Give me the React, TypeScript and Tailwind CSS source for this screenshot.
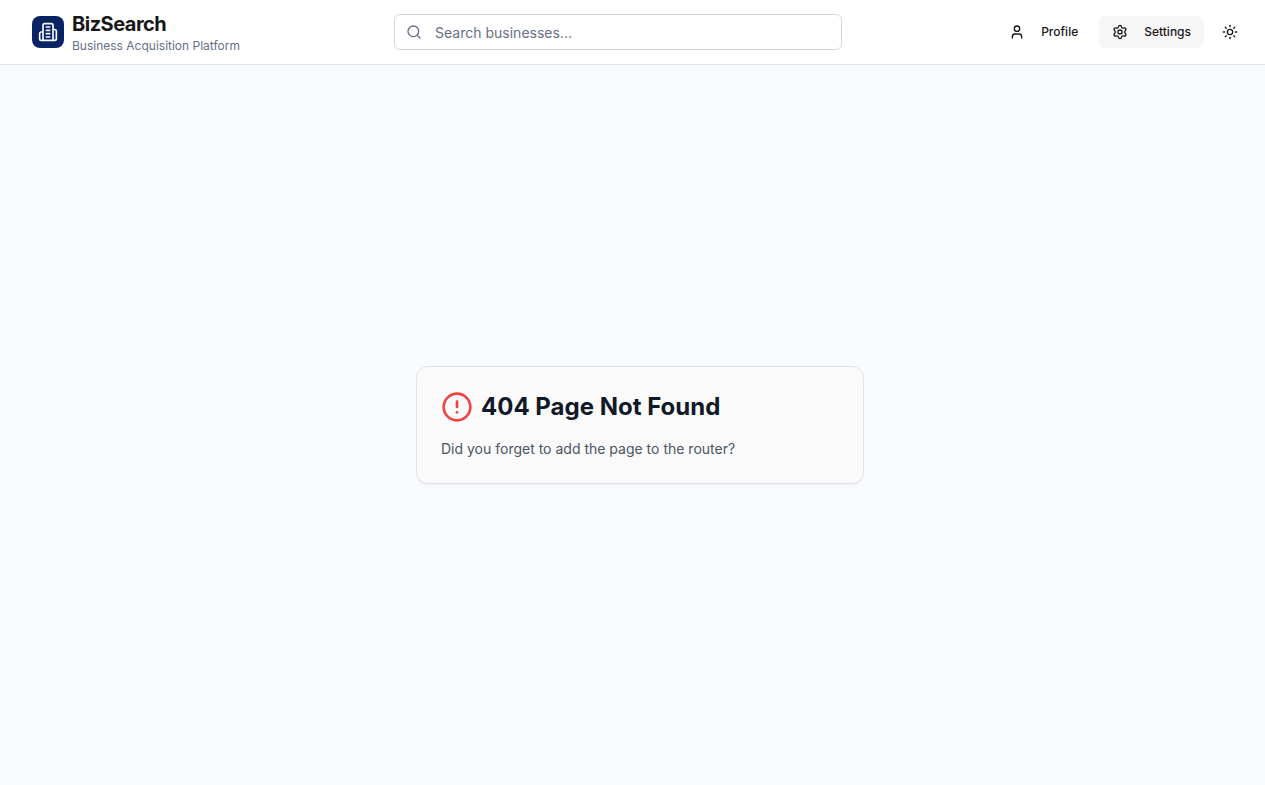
import { CircleAlert, Search, Settings, Sun, User } from "lucide-react";

function BuildingIcon({ className }: { className?: string }) {
  return (
    <svg
      viewBox="0 0 24 24"
      fill="none"
      stroke="currentColor"
      strokeWidth="2"
      strokeLinecap="round"
      strokeLinejoin="round"
      aria-hidden="true"
      className={className}
    >
      <path d="M6 22V4a2 2 0 0 1 2-2h8a2 2 0 0 1 2 2v18Z" />
      <path d="M6 12H4a2 2 0 0 0-2 2v6a2 2 0 0 0 2 2h2" />
      <path d="M18 9h2a2 2 0 0 1 2 2v9a2 2 0 0 1-2 2h-2" />
      <path d="M10 6h4" />
      <path d="M10 10h4" />
      <path d="M10 14h4" />
      <path d="M10 18h4" />
    </svg>
  );
}

function Header() {
  return (
    <header className="border-b border-[#e2e5ea] bg-white">
      <div className="flex h-16 items-center justify-between gap-4 pl-8 pr-[17px]">
        <a href="/" className="flex items-center gap-2">
          <span className="flex size-8 items-center justify-center rounded-lg bg-[#0a2463]">
            <BuildingIcon className="size-5 text-[#f8fafc]" />
          </span>
          <span className="flex flex-col">
            <span className="text-xl font-bold leading-7 tracking-tight text-[#171717]">BizSearch</span>
            <span className="text-xs text-[#667085]">Business Acquisition Platform</span>
          </span>
        </a>
        <form role="search" className="relative w-full max-w-md">
          <Search className="absolute left-3 top-1/2 size-4 -translate-y-1/2 text-[#667085]" />
          <input
            type="search"
            aria-label="Search businesses"
            placeholder="Search businesses..."
            className="h-9 w-full rounded-md border border-[#d4d4dc] bg-white pl-10 pr-3 text-sm outline-none placeholder:text-[#667085]"
          />
        </form>
        <nav className="flex items-center gap-2 text-xs font-medium text-[#171717]">
          <a href="/profile" className="flex h-8 items-center gap-4 rounded-md border border-transparent px-3">
            <User className="size-4" />
            Profile
          </a>
          <a href="/settings" className="flex h-8 items-center gap-4 rounded-md border border-[#f7f7f7] bg-[#f7f7f7] px-3">
            <Settings className="size-4" />
            Settings
          </a>
          <button type="button" aria-label="Toggle theme" className="flex h-8 w-9 items-center justify-center rounded-md">
            <Sun className="size-4" />
          </button>
        </nav>
      </div>
    </header>
  );
}

export default function App() {
  return (
    <div className="flex min-h-screen flex-col bg-[#f8fafc] font-['Inter',sans-serif]">
      <Header />
      <main className="flex flex-1 items-center justify-center pl-[15px]">
        <section className="w-full max-w-md rounded-xl border border-[#dfe2e8] bg-[#fafafa] p-6 shadow-xs">
          <div className="flex items-center gap-2">
            <CircleAlert className="size-8 text-[#ef4444]" />
            <h1 className="text-2xl font-bold text-[#111827]">404 Page Not Found</h1>
          </div>
          <p className="mt-4 text-sm text-[#4b5563]">Did you forget to add the page to the router?</p>
        </section>
      </main>
    </div>
  );
}
